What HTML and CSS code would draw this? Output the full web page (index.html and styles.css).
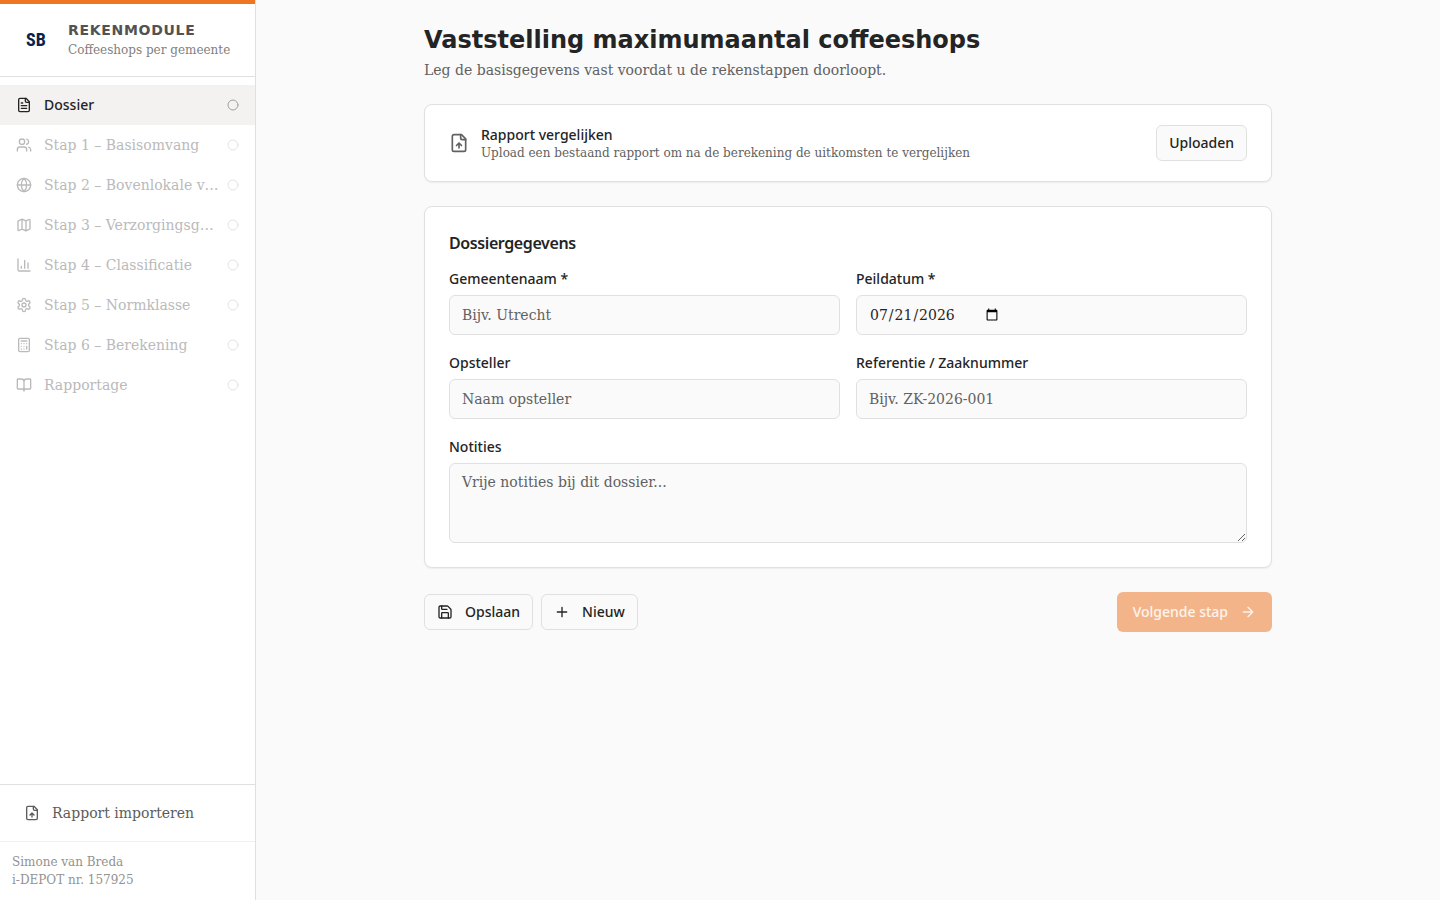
FILE: index.html
```html
<!DOCTYPE html>
<html lang="nl">
<head>
    <meta charset="UTF-8">
    <meta name="viewport" content="width=device-width, initial-scale=1">
    <title>Rekenmodule</title>
    <link rel="stylesheet" href="styles.css">
</head>
<body>
<!-- gedeelde iconen -->
<svg class="sprite" aria-hidden="true">
    <symbol id="i-file" viewBox="0 0 24 24"><path d="M15 2H6a2 2 0 0 0-2 2v16a2 2 0 0 0 2 2h12a2 2 0 0 0 2-2V7Z"/><path d="M14 2v4a2 2 0 0 0 2 2h4M10 9H8M16 13H8M16 17H8"/></symbol>
    <symbol id="i-file-up" viewBox="0 0 24 24"><path d="M15 2H6a2 2 0 0 0-2 2v16a2 2 0 0 0 2 2h12a2 2 0 0 0 2-2V7Z"/><path d="M14 2v4a2 2 0 0 0 2 2h4M12 12v6M15 15l-3-3-3 3"/></symbol>
    <symbol id="i-users" viewBox="0 0 24 24"><path d="M16 21v-2a4 4 0 0 0-4-4H6a4 4 0 0 0-4 4v2"/><circle cx="9" cy="7" r="4"/><path d="M22 21v-2a4 4 0 0 0-3-3.87M16 3.13a4 4 0 0 1 0 7.75"/></symbol>
    <symbol id="i-globe" viewBox="0 0 24 24"><circle cx="12" cy="12" r="10"/><path d="M12 2a14.5 14.5 0 0 0 0 20 14.5 14.5 0 0 0 0-20M2 12h20"/></symbol>
    <symbol id="i-map" viewBox="0 0 24 24"><path d="M14.106 5.553a2 2 0 0 0 1.788 0l3.659-1.83A1 1 0 0 1 21 4.619v12.764a1 1 0 0 1-.553.894l-4.553 2.277a2 2 0 0 1-1.788 0l-4.212-2.106a2 2 0 0 0-1.788 0l-3.659 1.83A1 1 0 0 1 3 19.381V6.618a1 1 0 0 1 .553-.894l4.553-2.277a2 2 0 0 1 1.788 0zM15 5.764v15M9 3.236v15"/></symbol>
    <symbol id="i-chart" viewBox="0 0 24 24"><path d="M3 3v16a2 2 0 0 0 2 2h16M18 17V9M13 17V5M8 17v-3"/></symbol>
    <symbol id="i-settings" viewBox="0 0 24 24"><path d="M12.22 2h-.44a2 2 0 0 0-2 2v.18a2 2 0 0 1-1 1.73l-.43.25a2 2 0 0 1-2 0l-.15-.08a2 2 0 0 0-2.73.73l-.22.38a2 2 0 0 0 .73 2.73l.15.1a2 2 0 0 1 1 1.72v.51a2 2 0 0 1-1 1.74l-.15.09a2 2 0 0 0-.73 2.73l.22.38a2 2 0 0 0 2.73.73l.15-.08a2 2 0 0 1 2 0l.43.25a2 2 0 0 1 1 1.73V20a2 2 0 0 0 2 2h.44a2 2 0 0 0 2-2v-.18a2 2 0 0 1 1-1.73l.43-.25a2 2 0 0 1 2 0l.15.08a2 2 0 0 0 2.73-.73l.22-.39a2 2 0 0 0-.73-2.73l-.15-.08a2 2 0 0 1-1-1.74v-.5a2 2 0 0 1 1-1.74l.15-.09a2 2 0 0 0 .73-2.73l-.22-.38a2 2 0 0 0-2.73-.73l-.15.08a2 2 0 0 1-2 0l-.43-.25a2 2 0 0 1-1-1.73V4a2 2 0 0 0-2-2z"/><circle cx="12" cy="12" r="3"/></symbol>
    <symbol id="i-calc" viewBox="0 0 24 24"><rect width="16" height="20" x="4" y="2" rx="2"/><path d="M8 6h8M16 14v4M16 10h.01M12 10h.01M8 10h.01M12 14h.01M8 14h.01M12 18h.01M8 18h.01"/></symbol>
    <symbol id="i-book" viewBox="0 0 24 24"><path d="M12 7v14M3 18a1 1 0 0 1-1-1V4a1 1 0 0 1 1-1h5a4 4 0 0 1 4 4 4 4 0 0 1 4-4h5a1 1 0 0 1 1 1v13a1 1 0 0 1-1 1h-6a3 3 0 0 0-3 3 3 3 0 0 0-3-3z"/></symbol>
    <symbol id="i-circle" viewBox="0 0 24 24"><circle cx="12" cy="12" r="10"/></symbol>
    <symbol id="i-save" viewBox="0 0 24 24"><path d="M15.2 3a2 2 0 0 1 1.4.6l3.8 3.8a2 2 0 0 1 .6 1.4V19a2 2 0 0 1-2 2H5a2 2 0 0 1-2-2V5a2 2 0 0 1 2-2z"/><path d="M17 21v-7a1 1 0 0 0-1-1H8a1 1 0 0 0-1 1v7M7 3v4a1 1 0 0 0 1 1h7"/></symbol>
    <symbol id="i-plus" viewBox="0 0 24 24"><path d="M5 12h14M12 5v14"/></symbol>
    <symbol id="i-arrow" viewBox="0 0 24 24"><path d="M5 12h14M12 5l7 7-7 7"/></symbol>
</svg>

<div class="layout">
    <aside class="sidebar">
        <div class="brand">
            <span class="brand-logo">SB</span>
            <div>
                <div class="brand-title">REKENMODULE</div>
                <div class="brand-sub">Coffeeshops per gemeente</div>
            </div>
        </div>
        <nav class="steps">
            <button type="button" class="step active"><svg class="icon"><use href="#i-file"/></svg><span class="step-label">Dossier</span><svg class="icon status"><use href="#i-circle"/></svg></button>
            <button type="button" class="step" disabled><svg class="icon"><use href="#i-users"/></svg><span class="step-label">Stap 1 – Basisomvang</span><svg class="icon status"><use href="#i-circle"/></svg></button>
            <button type="button" class="step" disabled><svg class="icon"><use href="#i-globe"/></svg><span class="step-label">Stap 2 – Bovenlokale vraag</span><svg class="icon status"><use href="#i-circle"/></svg></button>
            <button type="button" class="step" disabled><svg class="icon"><use href="#i-map"/></svg><span class="step-label">Stap 3 – Verzorgingsgebied</span><svg class="icon status"><use href="#i-circle"/></svg></button>
            <button type="button" class="step" disabled><svg class="icon"><use href="#i-chart"/></svg><span class="step-label">Stap 4 – Classificatie</span><svg class="icon status"><use href="#i-circle"/></svg></button>
            <button type="button" class="step" disabled><svg class="icon"><use href="#i-settings"/></svg><span class="step-label">Stap 5 – Normklasse</span><svg class="icon status"><use href="#i-circle"/></svg></button>
            <button type="button" class="step" disabled><svg class="icon"><use href="#i-calc"/></svg><span class="step-label">Stap 6 – Berekening</span><svg class="icon status"><use href="#i-circle"/></svg></button>
            <button type="button" class="step" disabled><svg class="icon"><use href="#i-book"/></svg><span class="step-label">Rapportage</span><svg class="icon status"><use href="#i-circle"/></svg></button>
        </nav>
        <div class="import">
            <button type="button" class="step import-btn"><svg class="icon"><use href="#i-file-up"/></svg><span class="step-label">Rapport importeren</span></button>
        </div>
        <div class="credits">
            <div>Simone van Breda</div>
            <div>i-DEPOT nr. 157925</div>
        </div>
    </aside>

    <main class="content">
        <header class="page-header">
            <h1>Vaststelling maximumaantal coffeeshops</h1>
            <p>Leg de basisgegevens vast voordat u de rekenstappen doorloopt.</p>
        </header>

        <section class="card compare">
            <svg class="icon icon-lg"><use href="#i-file-up"/></svg>
            <div class="compare-text">
                <div class="compare-title">Rapport vergelijken</div>
                <div class="compare-sub">Upload een bestaand rapport om na de berekening de uitkomsten te vergelijken</div>
            </div>
            <button type="button" class="btn">Uploaden</button>
        </section>

        <form id="dossier" class="card form">
            <h2>Dossiergegevens</h2>
            <div class="form-grid">
                <div class="field">
                    <label for="gemeente">Gemeentenaam *</label>
                    <input id="gemeente" type="text" class="control" placeholder="Bijv. Utrecht">
                </div>
                <div class="field">
                    <label for="peildatum">Peildatum *</label>
                    <input id="peildatum" type="date" class="control" value="2026-07-21">
                </div>
                <div class="field">
                    <label for="opsteller">Opsteller</label>
                    <input id="opsteller" type="text" class="control" placeholder="Naam opsteller">
                </div>
                <div class="field">
                    <label for="referentie">Referentie / Zaaknummer</label>
                    <input id="referentie" type="text" class="control" placeholder="Bijv. ZK-2026-001">
                </div>
                <div class="field wide">
                    <label for="notities">Notities</label>
                    <textarea id="notities" class="control notes" placeholder="Vrije notities bij dit dossier..."></textarea>
                </div>
            </div>
        </form>

        <div class="actions">
            <button type="button" class="btn"><svg class="icon"><use href="#i-save"/></svg>Opslaan</button>
            <button type="button" class="btn"><svg class="icon"><use href="#i-plus"/></svg>Nieuw</button>
            <button type="submit" form="dossier" class="btn btn-primary" disabled>Volgende stap<svg class="icon"><use href="#i-arrow"/></svg></button>
        </div>
    </main>
</div>
</body>
</html>
```
FILE: styles.css
```css
* {
    box-sizing: border-box;
}

body {
    margin: 0;
    background: #fafafa;
    color: #242424;
    font: 14px/20px "DejaVu Serif", serif;
}

button,
input,
textarea {
    font: inherit;
    color: inherit;
}

h1,
h2,
p {
    margin: 0;
}

.sprite {
    display: none;
}

.icon {
    width: 16px;
    height: 16px;
    flex-shrink: 0;
    overflow: visible;
    fill: none;
    stroke: currentColor;
    stroke-width: 2;
    stroke-linecap: round;
    stroke-linejoin: round;
}

.icon-lg {
    width: 20px;
    height: 20px;
}

.layout {
    display: flex;
    min-height: 100vh;
}

/* sidebar */
.sidebar {
    display: flex;
    flex-direction: column;
    width: 256px;
    flex-shrink: 0;
    background: #fff;
    border-right: 1px solid #e0e0e0;
}

.brand {
    display: flex;
    align-items: center;
    gap: 12px;
    padding: 16px;
    border-top: 4px solid #ee7623;
    border-bottom: 1px solid #e0e0e0;
}

.brand-logo {
    width: 40px;
    text-align: center;
    color: #0b2149;
    font: bold 18px/40px "Roboto Condensed", "Roboto", sans-serif;
}

.brand-title {
    color: #525252;
    font-family: "DejaVu Sans", sans-serif;
    font-weight: 700;
    letter-spacing: 0.05em;
}

.brand-sub {
    color: #808080;
    font-size: 12px;
}

.steps {
    flex: 1;
    padding: 8px 0;
}

.step {
    display: flex;
    align-items: center;
    gap: 12px;
    width: 100%;
    height: 40px;
    padding: 0 16px;
    border: 0;
    background: none;
    text-align: left;
}

.step:disabled {
    color: #bababa;
}

.step.active {
    background: #f3f2f1;
    font-family: "Noto Sans", sans-serif;
    font-weight: 500;
}

.step-label {
    flex: 1;
    overflow: hidden;
    white-space: nowrap;
    text-overflow: ellipsis;
}

.status {
    width: 12px;
    height: 12px;
    margin-left: -4px;
    color: #a0a0a0;
}

.step:disabled .status {
    color: #e3e3e3;
}

.import {
    padding: 8px;
    border-top: 1px solid #e0e0e0;
}

.import-btn {
    color: #5c5c5c;
}

.credits {
    padding: 11px 12px;
    border-top: 1px solid #f0f0f0;
    color: #929292;
    font-size: 12px;
    line-height: 18px;
}

/* main */
.content {
    display: flex;
    flex-direction: column;
    gap: 24px;
    flex: 1;
    max-width: 896px;
    margin: 0 auto;
    padding: 24px;
}

.page-header h1 {
    font: bold 24px/32px "DejaVu Sans", sans-serif;
}

.page-header p {
    margin-top: 4px;
    color: #616161;
}

.card {
    padding: 24px;
    background: #fff;
    border: 1px solid #e0e0e0;
    border-radius: 8px;
    box-shadow: 0 1px 2px rgba(0, 0, 0, .06);
}

.compare {
    display: flex;
    align-items: center;
    gap: 12px;
    padding: 20px 24px;
}

.compare .icon {
    color: #616161;
}

.compare-text {
    flex: 1;
}

.compare-title,
.field label,
.btn {
    font-family: "Noto Sans", sans-serif;
    font-weight: 500;
}

.compare-sub {
    color: #616161;
    font-size: 12px;
    line-height: 16px;
}

.form h2 {
    margin-bottom: 16px;
    font: 600 16px/24px "Noto Sans", sans-serif;
    letter-spacing: -0.025em;
}

.form-grid {
    display: grid;
    grid-template-columns: 1fr 1fr;
    gap: 20px 16px;
}

.wide {
    grid-column: 1 / -1;
}

.field label {
    display: block;
    margin-bottom: 8px;
    line-height: 16px;
}

.control {
    display: flex;
    width: 100%;
    height: 40px;
    padding: 8px 12px;
    background: #fafafa;
    border: 1px solid #e0e0e0;
    border-radius: 6px;
}

.control::placeholder {
    color: #616161;
}

.notes {
    height: 80px;
    resize: vertical;
}

.actions {
    display: flex;
    align-items: center;
    gap: 8px;
}

.btn {
    display: flex;
    align-items: center;
    gap: 12px;
    height: 36px;
    padding: 0 12px;
    background: #fafafa;
    border: 1px solid #e0e0e0;
    border-radius: 6px;
}

.btn-primary {
    height: 40px;
    margin-left: auto;
    padding: 0 16px;
    background: #f4b48a;
    border: 0;
    color: #fef4ec;
}
```
